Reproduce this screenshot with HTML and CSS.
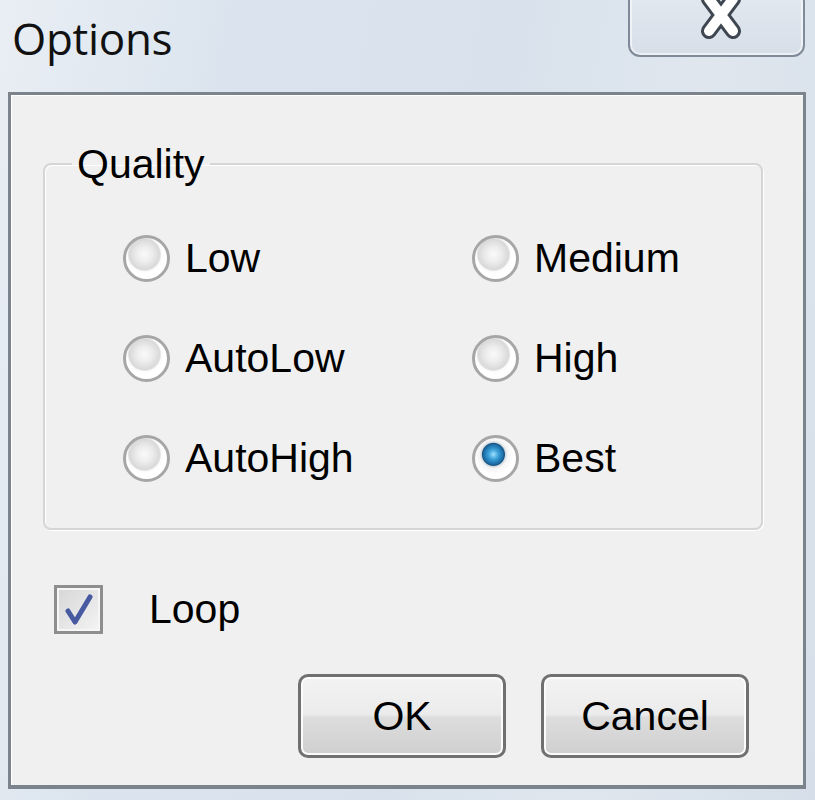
FILE: index.html
```html
<!DOCTYPE html>
<html>
<head>
<meta charset="utf-8">
<link rel="stylesheet" href="styles.css">
</head>
<body>
<div class="window">
  <div class="titlebar">
    <div class="title">Options</div>
    <div class="close">
      <svg width="50" height="46" viewBox="0 0 50 46">
        <path d="M13 2 L37 34 M37 2 L13 34" stroke="#3e4651" stroke-width="16" stroke-linecap="round" fill="none"/>
        <path d="M13 2 L37 34 M37 2 L13 34" stroke="#ffffff" stroke-width="10" stroke-linecap="round" fill="none"/>
      </svg>
    </div>
  </div>
  <div class="client">
    <fieldset class="group">
      <legend class="legend">Quality</legend>
      <div class="grid">
        <label class="radio"><span class="dot"></span><span>Low</span></label>
        <label class="radio"><span class="dot"></span><span>Medium</span></label>
        <label class="radio"><span class="dot"></span><span>AutoLow</span></label>
        <label class="radio"><span class="dot"></span><span>High</span></label>
        <label class="radio"><span class="dot"></span><span>AutoHigh</span></label>
        <label class="radio"><span class="dot checked"></span><span>Best</span></label>
      </div>
    </fieldset>
    <label class="check">
      <span class="box">
        <svg width="42" height="42" viewBox="0 0 42 42">
          <path d="M10 22 L17 33 L32 8" stroke="#4759a0" stroke-width="5" fill="none" stroke-linejoin="round" stroke-linecap="round"/>
        </svg>
      </span>
      <span>Loop</span>
    </label>
    <div class="buttons">
      <button class="btn">OK</button>
      <button class="btn">Cancel</button>
    </div>
  </div>
</div>
</body>
</html>
```
FILE: styles.css
```css
html, body {
  margin: 0;
  padding: 0;
}
body {
  width: 815px;
  height: 800px;
  overflow: hidden;
  background: linear-gradient(100deg, #e9eef4 0%, #dbe4ee 25%, #d9e2ec 55%, #dfe6ee 75%, #d6dfe9 100%);
  font-family: "Liberation Sans", Arial, sans-serif;
}
.window {
  margin: 0 9px 0 8px;
}
.titlebar {
  height: 92px;
  display: flex;
  justify-content: space-between;
  align-items: flex-start;
}
.title {
  font-family: "Open Sans", "Noto Sans", sans-serif;
  font-size: 44px;
  line-height: 60px;
  margin: 8px 0 0 4px;
  color: #111;
  letter-spacing: -0.3px;
}
.close {
  width: 173px;
  height: 63px;
  margin-top: -10px;
  margin-right: 1px;
  border: 2px solid #7f8a98;
  border-radius: 12px;
  background: linear-gradient(#e3e9f0, #d6dee8);
  box-shadow: inset 0 0 0 2px rgba(255,255,255,0.55);
  display: flex;
  justify-content: center;
  align-items: flex-start;
}
.close svg {
  margin-top: 5px;
  margin-left: 8px;
}
.client {
  height: 690px;
  border: 3px solid #7b838d;
  border-bottom-width: 4px;
  background: #f0f0f0;
  box-shadow: inset 1px 1px 0 #ffffff;
}
.group {
  box-sizing: border-box;
  width: 720px;
  height: 386px;
  margin: 49px 0 0 32px;
  padding: 0 0 0 27px;
  border: 2px solid #d5d5d5;
  border-radius: 8px;
  box-shadow: inset 1px 1px 0 #ffffff, 1px 1px 0 #ffffff;
}
.legend {
  font-size: 41px;
  line-height: 40px;
  padding: 0 5px;
  color: #000;
}
.grid {
  display: grid;
  grid-template-columns: 349px auto;
  grid-auto-rows: 100px;
  padding: 24px 0 0 51px;
}
.radio {
  display: flex;
  align-items: center;
  gap: 15px;
  font-size: 41px;
  color: #000;
}
.dot {
  box-sizing: border-box;
  width: 47px;
  height: 47px;
  border-radius: 50%;
  border: 3px solid #a6a6a6;
  background: radial-gradient(circle at 45% 40%, #fafafa 0, #ececec 8px, #d9d9d9 15px, #e4e4e4 16px, #fbfbfb 17px, #ffffff 20px);
  flex: none;
}
.dot.checked {
  background: radial-gradient(circle at 45% 40%, #9fe0ff 0, #3aa0d8 5px, #1b6aa3 10px, #14507e 11px, #cfd8de 12px, #f4f4f4 14px, #ffffff 20px);
}
.check {
  display: flex;
  align-items: center;
  gap: 46px;
  margin: 55px 0 0 43px;
  font-size: 41px;
  color: #000;
}
.box {
  box-sizing: border-box;
  width: 49px;
  height: 49px;
  border: 3px solid #8e8e8e;
  background: linear-gradient(135deg, #d6d6d6, #f4f4f4);
  box-shadow: inset 0 0 0 2px #f6f6f6;
  display: flex;
  align-items: center;
  justify-content: center;
}
.buttons {
  display: flex;
  justify-content: flex-end;
  gap: 35px;
  margin: 40px 54px 0 0;
}
.btn {
  box-sizing: border-box;
  width: 208px;
  height: 84px;
  border: 3px solid #707070;
  border-radius: 10px;
  background: linear-gradient(#f3f3f3 0%, #ebebeb 48%, #dddddd 52%, #cfcfcf 100%);
  box-shadow: inset 0 0 0 2px #fbfbfb;
  font-family: "Liberation Sans", Arial, sans-serif;
  font-size: 41px;
  color: #000;
  padding: 0;
}
```
